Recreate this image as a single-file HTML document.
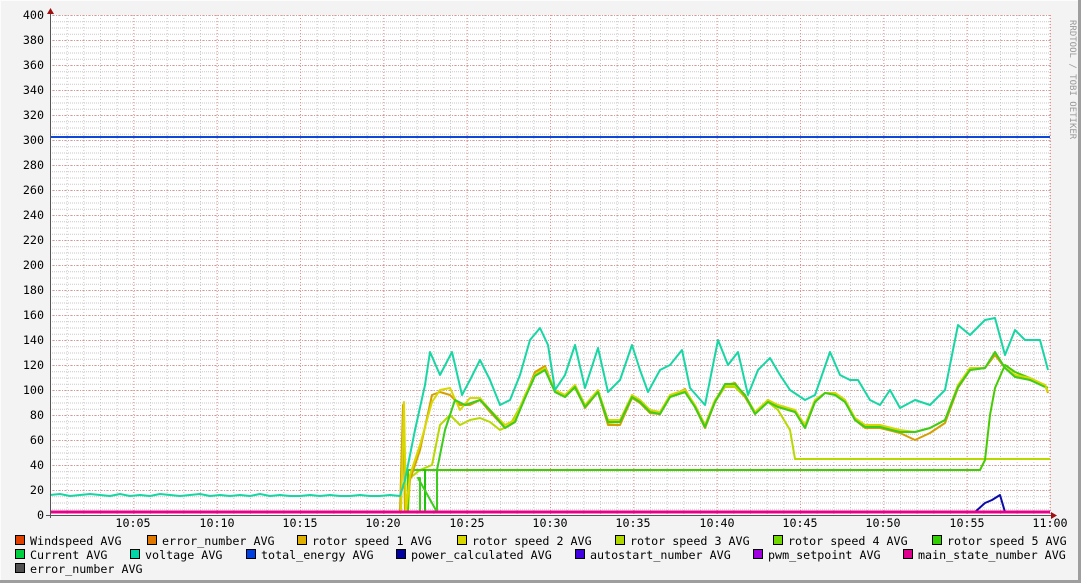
<!DOCTYPE html><html><head><meta charset="utf-8"><style>
body{margin:0;background:#f3f3f3;}
svg{display:block}
text{font-family:"DejaVu Sans Mono","Liberation Mono",monospace;font-size:11.7px;fill:#000}
</style></head><body>
<svg width="1081" height="583" viewBox="0 0 1081 583" xmlns="http://www.w3.org/2000/svg">
<defs>
<pattern id="mh" x="50" y="15" width="4" height="6.25" patternUnits="userSpaceOnUse"><rect x="0" y="0" width="1" height="1" fill="#c8c8c8"/><rect x="2" y="0" width="1" height="1" fill="#c8c8c8"/></pattern>
<pattern id="mv" x="50" y="15" width="16.6667" height="3" patternUnits="userSpaceOnUse"><rect x="0" y="0" width="1" height="1" fill="#c8c8c8"/></pattern>
<pattern id="Mh" x="50" y="15" width="3" height="25" patternUnits="userSpaceOnUse"><rect x="0" y="0" width="1" height="1" fill="#e89090"/></pattern>
<pattern id="Mv" x="50" y="15" width="83.3333" height="3" patternUnits="userSpaceOnUse"><rect x="0" y="0" width="1" height="1" fill="#e89090"/></pattern>
</defs>
<rect x="0" y="0" width="1081" height="583" fill="#f3f3f3"/>
<line x1="0" y1="0.5" x2="1081" y2="0.5" stroke="#fcfcfc"/>
<line x1="0.5" y1="0" x2="0.5" y2="583" stroke="#fcfcfc"/>
<line x1="1079.5" y1="0" x2="1079.5" y2="583" stroke="#9e9e9e" stroke-width="3"/>
<line x1="0" y1="581.5" x2="1081" y2="581.5" stroke="#9e9e9e" stroke-width="3"/>
<rect x="50" y="15" width="1000" height="500" fill="#fff"/>
<rect x="50" y="15" width="1001" height="500" fill="url(#mh)"/>
<rect x="50" y="15" width="1001" height="500" fill="url(#mv)"/>
<rect x="50" y="15" width="1001" height="501" fill="url(#Mh)"/>
<rect x="50" y="15" width="1001" height="500" fill="url(#Mv)"/>
<text x="1070" y="20" transform="rotate(90 1070 20)" style="font-size:9px;fill:#999">RRDTOOL / TOBI OETIKER</text>
<g fill="none" stroke-width="2" stroke-linejoin="round">
<line x1="50" y1="137" x2="1050" y2="137" stroke="#0d48d8"/>
<polyline stroke="#b8d800" points="408,512 410,478 420,470 432,465 440,425 450,415 460,425 470,420 480,418 490,422 500,430 510,425 525,398 535,372 545,368 555,392 565,395 575,388 585,407 598,392 608,423 620,422 632,396 640,402 650,413 660,414 670,397 685,392 695,407 705,428 715,402 725,387 735,387 745,397 755,414 768,402 778,410 790,430 795,459 1050,459"/>
<polyline stroke="#44cc00" points="408,512 408,470 980,470 985,460 990,415 995,388 1005,365 1015,372 1030,378 1048,388"/>
<polyline stroke="#1ec40a" points="425,512 425,470 423,470"/>
<polyline stroke="#d4a000" points="400,512 403,405 405,512 410,480 420,450 432,395 440,392 450,395 460,405 470,405 480,400 490,412 505,428 515,422 525,397 535,372 545,366 555,392 565,397 575,387 585,408 598,392 608,425 620,425 632,398 640,403 650,413 660,414 670,397 685,389 695,407 705,428 715,402 725,385 735,383 745,397 755,413 768,400 778,407 795,412 805,428 815,402 825,393 835,393 845,400 855,420 865,428 880,428 900,433 915,440 930,433 945,423 958,388 970,370 985,368 995,355 1005,368 1015,375 1030,380 1045,385 1048,393"/>
<polyline stroke="#d8d800" points="401,512 404,402 406,512 410,475 420,445 432,402 440,390 450,388 460,410 470,398 480,398 490,410 505,425 515,420 525,395 535,375 545,368 555,390 565,395 575,385 585,405 598,390 608,420 620,420 632,395 640,400 650,410 660,412 670,395 685,390 695,405 705,425 715,400 725,385 735,385 745,395 755,412 768,400 778,405 795,410 805,425 815,400 825,393 835,393 845,400 855,418 865,425 880,425 900,430 915,432 930,428 945,420 958,385 970,368 985,368 995,352 1005,368 1015,375 1030,378 1045,385 1048,392"/>
<polyline stroke="#3ccc1c" points="420,512 420,478 418,478 437,512 437,470 445,430 455,400 465,405 480,400 490,410 505,428 515,422 525,398 535,376 545,370 555,392 565,397 575,387 585,407 598,392 608,422 620,422 632,397 640,402 650,412 660,414 670,397 685,392 695,407 705,427 715,402 725,384 735,384 745,395 755,414 768,402 778,407 795,412 805,428 815,402 825,393 835,395 845,402 855,420 865,427 880,427 900,432 915,432 930,428 945,420 958,387 970,370 985,368 995,352 1005,368 1015,377 1030,380 1045,387"/>
<polyline stroke="#18d6a4" points="50,495 60,494 70,496 80,495 90,494 100,495 110,496 120,494 130,496 140,495 150,496 160,494 170,495 180,496 190,495 200,494 210,496 220,495 230,496 240,495 250,496 260,494 270,496 280,495 290,496 300,496 310,495 320,496 330,495 340,496 350,496 360,495 370,496 380,496 390,495 400,496 405,480 415,430 425,385 430,352 440,375 452,352 462,395 470,380 480,360 490,380 500,405 510,400 520,375 530,340 540,328 548,345 555,390 565,375 575,345 585,388 598,348 608,392 620,380 632,345 640,370 648,392 660,370 670,365 682,350 690,388 705,405 718,340 728,365 738,352 748,395 758,370 770,358 780,375 790,390 805,400 815,395 830,352 840,375 850,380 858,380 870,400 880,405 890,390 900,408 915,400 930,405 945,390 958,325 970,335 985,320 995,318 1005,355 1015,330 1025,340 1040,340 1048,370"/>
<polyline stroke="#0a0aa8" points="975,512 985,503 992,500 1000,495 1005,512"/>
<line x1="50" y1="512" x2="1050" y2="512" stroke="#e8008c" stroke-width="3"/>
</g>
<line x1="50.5" y1="10" x2="50.5" y2="518" stroke="#555"/>
<line x1="46" y1="515.5" x2="1054" y2="515.5" stroke="#555"/>
<polygon points="47,14 54,14 50.5,8" fill="#a01010"/>
<polygon points="1051,512 1051,519 1057,515.5" fill="#a01010"/>
<g text-anchor="end">
<text x="44" y="519">0</text><text x="44" y="494">20</text><text x="44" y="469">40</text><text x="44" y="444">60</text><text x="44" y="419">80</text><text x="44" y="394">100</text><text x="44" y="369">120</text><text x="44" y="344">140</text><text x="44" y="319">160</text><text x="44" y="294">180</text><text x="44" y="269">200</text><text x="44" y="244">220</text><text x="44" y="219">240</text><text x="44" y="194">260</text><text x="44" y="169">280</text><text x="44" y="144">300</text><text x="44" y="119">320</text><text x="44" y="94">340</text><text x="44" y="69">360</text><text x="44" y="44">380</text><text x="44" y="19">400</text>
</g>
<g text-anchor="middle">
<text x="133" y="527">10:05</text><text x="217" y="527">10:10</text><text x="300" y="527">10:15</text><text x="383" y="527">10:20</text><text x="467" y="527">10:25</text><text x="550" y="527">10:30</text><text x="633" y="527">10:35</text><text x="717" y="527">10:40</text><text x="800" y="527">10:45</text><text x="883" y="527">10:50</text><text x="967" y="527">10:55</text><text x="1050" y="527">11:00</text>
</g>
<g stroke="#000">
<rect x="15.5" y="535.5" width="9" height="9" fill="#e04000"/>
<rect x="147.5" y="535.5" width="9" height="9" fill="#e07800"/>
<rect x="297.5" y="535.5" width="9" height="9" fill="#e0b000"/>
<rect x="457.5" y="535.5" width="9" height="9" fill="#d8d800"/>
<rect x="615.5" y="535.5" width="9" height="9" fill="#b0d800"/>
<rect x="773.5" y="535.5" width="9" height="9" fill="#70d800"/>
<rect x="932.5" y="535.5" width="9" height="9" fill="#30d000"/>
<rect x="15.5" y="549.5" width="9" height="9" fill="#00d040"/>
<rect x="130.5" y="549.5" width="9" height="9" fill="#00d8a8"/>
<rect x="246.5" y="549.5" width="9" height="9" fill="#0040e0"/>
<rect x="396.5" y="549.5" width="9" height="9" fill="#0000a0"/>
<rect x="575.5" y="549.5" width="9" height="9" fill="#4000e0"/>
<rect x="753.5" y="549.5" width="9" height="9" fill="#a000e0"/>
<rect x="903.5" y="549.5" width="9" height="9" fill="#e00090"/>
<rect x="15.5" y="563.5" width="9" height="9" fill="#505050"/>
</g>
<text x="30" y="545">Windspeed AVG</text>
<text x="162" y="545">error_number AVG</text>
<text x="312" y="545">rotor speed 1 AVG</text>
<text x="472" y="545">rotor speed 2 AVG</text>
<text x="630" y="545">rotor speed 3 AVG</text>
<text x="788" y="545">rotor speed 4 AVG</text>
<text x="947" y="545">rotor speed 5 AVG</text>
<text x="30" y="559">Current AVG</text>
<text x="145" y="559">voltage AVG</text>
<text x="261" y="559">total_energy AVG</text>
<text x="411" y="559">power_calculated AVG</text>
<text x="590" y="559">autostart_number AVG</text>
<text x="768" y="559">pwm_setpoint AVG</text>
<text x="918" y="559">main_state_number AVG</text>
<text x="30" y="573">error_number AVG</text>
</svg>
</body></html>
